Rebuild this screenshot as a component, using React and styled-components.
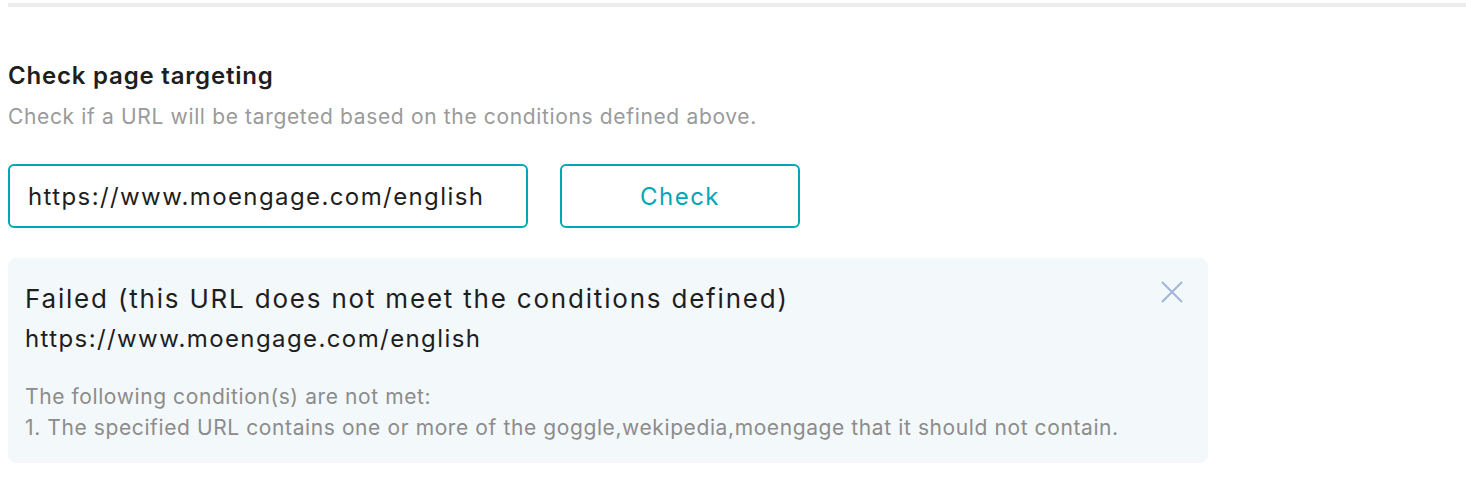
import React, { useState } from 'react'
import { styled, createGlobalStyle } from 'styled-components'

const GlobalStyle = createGlobalStyle`
  body {
    margin: 0;
    background: #ffffff;
    font-family: Inter, "Noto Sans", sans-serif;
  }
`

const Page = styled.div`
  padding-top: 3px;
  padding-left: 8px;
`

const TopRule = styled.div`
  height: 4px;
  background: #ececec;
`

const Section = styled.div`
  padding-top: 54px;
  width: 1200px;
`

const Title = styled.div`
  font-size: 24px;
  line-height: 30px;
  font-weight: 600;
  letter-spacing: 0.8px;
  color: #1e1e1e;
`

const Subtitle = styled.div`
  margin-top: 12px;
  font-size: 21px;
  line-height: 28px;
  letter-spacing: 0.65px;
  color: #9a9a9a;
`

const FormRow = styled.div`
  display: flex;
  gap: 32px;
  margin-top: 33px;
`

const UrlInput = styled.input`
  box-sizing: border-box;
  width: 520px;
  height: 64px;
  padding: 0 18px;
  border: 2px solid #00a7b5;
  border-radius: 6px;
  font-family: inherit;
  font-size: 24px;
  letter-spacing: 1.4px;
  color: #1e1e1e;
  outline: none;
`

const CheckButton = styled.button`
  box-sizing: border-box;
  width: 240px;
  height: 64px;
  border: 2px solid #00a7b5;
  border-radius: 6px;
  background: #ffffff;
  color: #00a7b5;
  font-family: inherit;
  font-size: 24px;
  letter-spacing: 1.5px;
  cursor: pointer;
`

const ResultBox = styled.div`
  position: relative;
  margin-top: 30px;
  padding: 23px 17px 20px;
  background: #f3f8fb;
  border-radius: 8px;
`

const ResultTitle = styled.div`
  font-size: 26px;
  line-height: 36px;
  letter-spacing: 1.8px;
  color: #1e1e1e;
`

const ResultUrl = styled.div`
  margin-top: 6px;
  font-size: 24px;
  line-height: 32px;
  letter-spacing: 1.4px;
  color: #1e1e1e;
`

const Conditions = styled.div`
  margin-top: 26px;
  font-size: 21px;
  line-height: 31px;
  letter-spacing: 0.6px;
  color: #8c8c8c;
`

const CloseButton = styled.button`
  position: absolute;
  top: 23px;
  right: 25px;
  width: 22px;
  height: 22px;
  padding: 0;
  border: 0;
  background: transparent;
  cursor: pointer;
`

function CloseIcon() {
  return (
    <svg width="22" height="22" viewBox="0 0 22 22">
      <path d="M1 1 L21 21 M21 1 L1 21" stroke="#a4b6d8" strokeWidth="2.2" />
    </svg>
  )
}

export default function App() {
  const [url, setUrl] = useState('https://www.moengage.com/english')
  const [open, setOpen] = useState(true)

  return (
    <Page>
      <GlobalStyle />
      <TopRule />
      <Section>
        <Title>Check page targeting</Title>
        <Subtitle>Check if a URL will be targeted based on the conditions defined above.</Subtitle>
        <FormRow>
          <UrlInput value={url} onChange={(e) => setUrl(e.target.value)} />
          <CheckButton onClick={() => setOpen(true)}>Check</CheckButton>
        </FormRow>
        {open ? (
          <ResultBox>
            <ResultTitle>Failed (this URL does not meet the conditions defined)</ResultTitle>
            <ResultUrl>https://www.moengage.com/english</ResultUrl>
            <Conditions>
              The following condition(s) are not met:
              <br />
              1. The specified URL contains one or more of the goggle,wekipedia,moengage that it should not contain.
            </Conditions>
            <CloseButton onClick={() => setOpen(false)}>
              <CloseIcon />
            </CloseButton>
          </ResultBox>
        ) : null}
      </Section>
    </Page>
  )
}
